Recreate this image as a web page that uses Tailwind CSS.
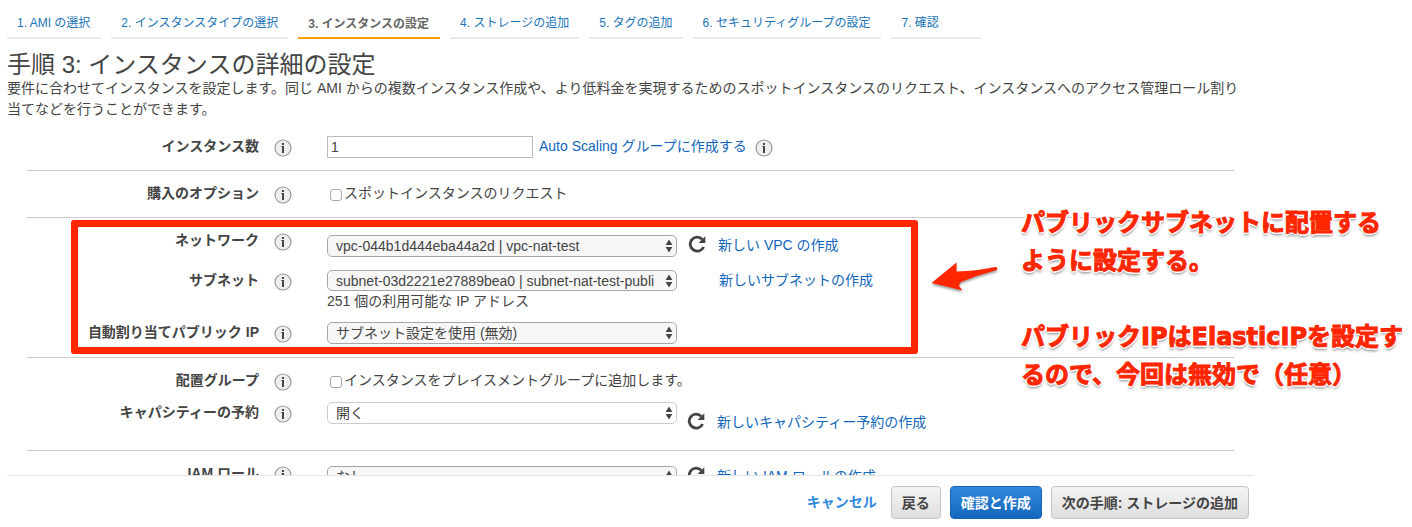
<!DOCTYPE html>
<html lang="ja">

<head>
  <meta charset="UTF-8" />
  <meta name="viewport" content="width=device-width, initial-scale=1.0" />
  <title>インスタンスの詳細の設定</title>
  <script src="https://cdn.jsdelivr.net/npm/@tailwindcss/browser@4"></script>
</head>

<body class="relative h-screen overflow-hidden bg-white font-['Liberation_Sans','Noto_Sans_CJK_JP',sans-serif] text-sm text-[#444]">

  <!-- アイコン定義 -->
  <svg class="hidden">
    <symbol id="info" viewBox="0 0 18 18">
      <circle cx="9" cy="9" r="8" fill="#eee" stroke="#999" stroke-width="1.2" />
      <path d="M8 4h2v2H8zM7.4 7H10v7H8V8h-.6z" fill="#444" />
    </symbol>
    <symbol id="refresh" viewBox="0 0 18 18">
      <path d="M14.200 4.200A7 7 0 1 0 15.600 12" fill="none" stroke="#444" stroke-width="2.900" />
      <path d="M17.300 1.200v6.800h-6.800z" fill="#444" />
    </symbol>
    <symbol id="updown" viewBox="0 0 8 14">
      <path d="M4 .5l3.400 5.500H.6zM4 13.500L.6 8h6.800z" fill="#444" />
    </symbol>
  </svg>

  <div class="mr-[158px] ml-[7px] flex h-full flex-col">

    <!-- ステップ -->
    <nav class="flex h-[39px] shrink-0 gap-[10px] text-xs whitespace-nowrap text-[#1a73b8]">
      <a href="#" class="border-b-2 border-[#eaeaea] pt-[15px] pr-[11px] pl-[10px]">1. AMI の選択</a>
      <a href="#" class="border-b-2 border-[#eaeaea] px-[10px] pt-[15px]">2. インスタンスタイプの選択</a>
      <a href="#" class="border-b-2 border-[#f90] pt-4 pr-[11px] pl-[10px] font-bold text-[#666]">3. インスタンスの設定</a>
      <a href="#" class="border-b-2 border-[#eaeaea] px-[10px] pt-[15px]">4. ストレージの追加</a>
      <a href="#" class="border-b-2 border-[#eaeaea] px-[10px] pt-[15px]">5. タグの追加</a>
      <a href="#" class="border-b-2 border-[#eaeaea] pt-[15px] pr-[11px] pl-[10px]">6. セキュリティグループの設定</a>
      <a href="#" class="min-w-[90px] border-b-2 border-[#eaeaea] px-[10px] pt-[15px]">7. 確認</a>
    </nav>

    <main class="min-h-0 flex-1 overflow-hidden">
      <h1 class="mt-3 text-2xl leading-[27px]">手順 3: インスタンスの詳細の設定</h1>
      <p class="mr-[10px] mb-1 leading-[21px]">要件に合わせてインスタンスを設定します。同じ AMI からの複数インスタンス作成や、より低料金を実現するためのスポットインスタンスのリクエスト、インスタンスへのアクセス管理ロール割り当てなどを行うことができます。</p>

      <form class="mr-5 ml-5 leading-5">

        <div class="border-b border-[#ccc] pt-3">
          <div class="flex h-[34px] items-start">
            <label for="count" class="w-[232px] text-right font-bold">インスタンス数</label>
            <svg class="mt-[3px] ml-[15px] size-[18px]"><use href="#info" /></svg>
            <div class="ml-[35px] flex items-start">
              <input id="count" type="text" value="1" class="h-[22px] w-[206px] border border-[#bbb] px-[3px]" />
              <a href="#" class="ml-[6px] text-[#1166bb]">Auto Scaling グループに作成する</a>
              <svg class="mt-[3px] ml-2 size-[18px]"><use href="#info" /></svg>
            </div>
          </div>
        </div>

        <div class="border-b border-[#ccc] pt-3">
          <div class="flex h-[34px] items-start">
            <span class="w-[232px] text-right font-bold">購入のオプション</span>
            <svg class="mt-[3px] ml-[15px] size-[18px]"><use href="#info" /></svg>
            <label class="ml-[38px] flex items-start gap-[2px]">
              <input type="checkbox" class="mt-[6px] size-3 appearance-none rounded-[3px] border border-[#aaa] bg-white" />
              スポットインスタンスのリクエスト
            </label>
          </div>
        </div>

        <!-- ネットワーク設定 -->
        <div class="relative border-b border-[#ccc] pt-3">
          <div class="flex h-10 items-start">
            <label for="network" class="w-[232px] text-right font-bold">ネットワーク</label>
            <svg class="mt-[3px] ml-[15px] size-[18px]"><use href="#info" /></svg>
            <div class="mt-[5px] ml-[35px] flex items-start">
              <div class="relative">
                <select id="network" class="block h-[22px] w-[350px] appearance-none rounded-[5px] border border-[#a6a6a6] bg-[#f7f7f7] pr-4 pl-2">
                  <option>vpc-044b1d444eba44a2d | vpc-nat-test</option>
                </select>
                <svg class="pointer-events-none absolute top-1 right-1 h-[14px] w-2"><use href="#updown" /></svg>
              </div>
              <button type="button" class="ml-[11px]" aria-label="更新"><svg class="size-[18px]"><use href="#refresh" /></svg></button>
              <a href="#" class="ml-3 text-[#1166bb]">新しい VPC の作成</a>
            </div>
          </div>
          <div class="flex h-[52px] items-start">
            <label for="subnet" class="w-[232px] text-right font-bold">サブネット</label>
            <svg class="mt-[3px] ml-[15px] size-[18px]"><use href="#info" /></svg>
            <div class="ml-[35px]">
              <div class="relative">
                <select id="subnet" class="block h-[21px] w-[350px] appearance-none rounded-[5px] border border-[#a6a6a6] bg-[#f7f7f7] pr-4 pl-2">
                  <option>subnet-03d2221e27889bea0 | subnet-nat-test-publi</option>
                </select>
                <svg class="pointer-events-none absolute top-1 right-1 h-[14px] w-2"><use href="#updown" /></svg>
              </div>
              <p>251 個の利用可能な IP アドレス</p>
            </div>
            <a href="#" class="ml-[42px] text-[#1166bb]">新しいサブネットの作成</a>
          </div>
          <div class="flex h-[35px] items-start">
            <label for="public-ip" class="w-[232px] text-right font-bold">自動割り当てパブリック IP</label>
            <svg class="mt-[3px] ml-[15px] size-[18px]"><use href="#info" /></svg>
            <div class="relative ml-[35px]">
              <select id="public-ip" class="block h-[22px] w-[350px] appearance-none rounded-[5px] border border-[#a6a6a6] bg-[#f7f7f7] pr-4 pl-2">
                <option>サブネット設定を使用 (無効)</option>
              </select>
              <svg class="pointer-events-none absolute top-1 right-1 h-[14px] w-2"><use href="#updown" /></svg>
            </div>
          </div>
          <!-- 赤枠 -->
          <div class="pointer-events-none absolute top-[2px] bottom-[3px] left-11 w-[847px] rounded-[3px] border-[7px] border-[#ff2600]"></div>
        </div>

        <div class="border-b border-[#ccc] pt-3">
          <div class="flex h-8 items-start">
            <span class="w-[232px] text-right font-bold">配置グループ</span>
            <svg class="mt-[3px] ml-[15px] size-[18px]"><use href="#info" /></svg>
            <label class="ml-[38px] flex items-start gap-[2px]">
              <input type="checkbox" class="mt-[6px] size-3 appearance-none rounded-[3px] border border-[#aaa] bg-white" />
              インスタンスをプレイスメントグループに追加します。
            </label>
          </div>
          <div class="flex h-12 items-start">
            <label for="capacity" class="w-[232px] text-right font-bold">キャパシティーの予約</label>
            <svg class="mt-[3px] ml-[15px] size-[18px]"><use href="#info" /></svg>
            <div class="ml-[35px] flex items-start">
              <div class="relative">
                <select id="capacity" class="block h-[22px] w-[350px] appearance-none rounded-[5px] border border-[#ccc] bg-white pr-4 pl-2">
                  <option>開く</option>
                </select>
                <svg class="pointer-events-none absolute top-1 right-1 h-[14px] w-2"><use href="#updown" /></svg>
              </div>
              <button type="button" class="mt-[10px] ml-[10px]" aria-label="更新"><svg class="size-[18px]"><use href="#refresh" /></svg></button>
              <a href="#" class="mt-[10px] ml-3 text-[#1166bb]">新しいキャパシティー予約の作成</a>
            </div>
          </div>
        </div>

        <div class="pt-3">
          <div class="flex items-start">
            <label for="iam" class="w-[232px] text-right font-bold">IAM ロール</label>
            <svg class="mt-[3px] ml-[15px] size-[18px]"><use href="#info" /></svg>
            <div class="mt-[3px] ml-[35px] flex items-start">
              <div class="relative">
                <select id="iam" class="block h-[22px] w-[350px] appearance-none rounded-[5px] border border-[#a6a6a6] bg-[#f7f7f7] pr-4 pl-2">
                  <option>なし</option>
                </select>
                <svg class="pointer-events-none absolute top-1 right-1 h-[14px] w-2"><use href="#updown" /></svg>
              </div>
              <button type="button" class="ml-[10px]" aria-label="更新"><svg class="size-[18px]"><use href="#refresh" /></svg></button>
              <a href="#" class="ml-3 text-[#1166bb]">新しい IAM ロールの作成</a>
            </div>
          </div>
        </div>

      </form>
    </main>

    <footer class="flex h-[52px] shrink-0 items-start justify-end gap-[9px] border-t border-[#e5e5e5] pt-[10px] pr-[5px] font-bold">
      <a href="#" class="mr-[5px] leading-8 text-[#2e8ae0]">キャンセル</a>
      <button type="button" class="h-[33px] rounded-[4px] border border-[#c4c4c4] bg-linear-to-b from-[#f5f5f5] to-[#dedede] px-[10px]">戻る</button>
      <button type="button" class="h-[33px] rounded-[4px] border border-[#1464b8] bg-linear-to-b from-[#3389dd] to-[#1166bb] px-[10px] text-white">確認と作成</button>
      <button type="button" class="h-[33px] rounded-[4px] border border-[#c4c4c4] bg-linear-to-b from-[#f5f5f5] to-[#dedede] px-[10px]">次の手順: ストレージの追加</button>
    </footer>
  </div>

  <!-- 注釈 -->
  <svg class="absolute top-[258px] left-[928px] h-9 w-[74px] drop-shadow-[0_2px_1px_rgba(0,0,0,0.35)]" viewBox="0 0 74 36">
    <path d="M3.500 25L28.500 4.500V13.500Q48 13 67 9Q70 9 69 12Q50 17 33 24Q31 26 31 28L34.500 32.500Z" fill="#ff2600" />
  </svg>
  <div class="absolute top-[204px] left-[1021px] font-['DejaVu_Sans','Noto_Sans_CJK_JP',sans-serif] text-2xl leading-[38px] font-bold whitespace-nowrap text-[#ff2600] [-webkit-text-stroke:1px_#ff2600] [text-shadow:-2px_0_#fff,2px_0_#fff,0_-2px_#fff,0_2px_#fff,1px_1px_#fff,-1px_1px_#fff,0_3px_3px_rgba(0,0,0,0.5)]">
    <p>パブリックサブネットに配置する<br>ように設定する。</p>
    <p class="mt-[38px]">パブリックIPはElasticIPを設定す<br>るので、今回は無効で（任意）</p>
  </div>

</body>

</html>
